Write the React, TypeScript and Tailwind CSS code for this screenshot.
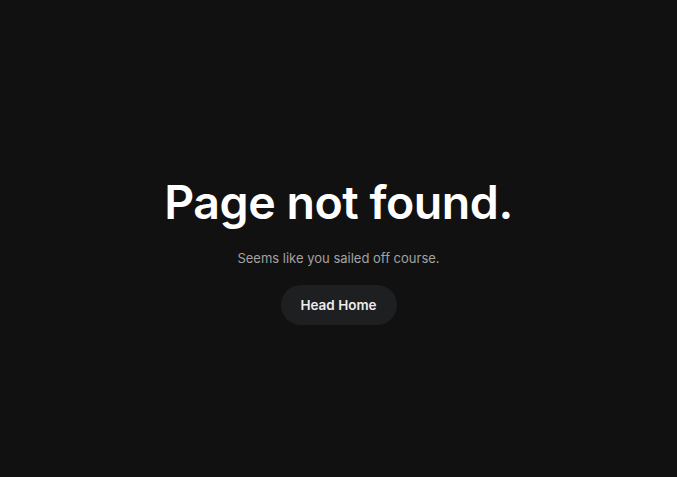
export default function App() {
  return (
    <div
      className="flex h-[477px] w-full flex-col items-center justify-center bg-[#111111] pt-[22px] text-center"
      style={{ fontFamily: 'Inter, "Noto Sans", sans-serif' }}
    >
      <h1 className="text-[46.5px] font-semibold leading-[56px] tracking-[-0.01em] text-white">
        Page not found.
      </h1>
      <p className="mt-[18px] text-[13px] leading-5 text-[#a3a3a3]">
        Seems like you sailed off course.
      </p>
      <a
        href="#"
        className="mt-[17px] flex h-10 w-[116px] items-center justify-center rounded-full bg-[#1e1f21] text-[13.5px] font-semibold text-[#ececec]"
      >
        Head Home
      </a>
    </div>
  );
}
